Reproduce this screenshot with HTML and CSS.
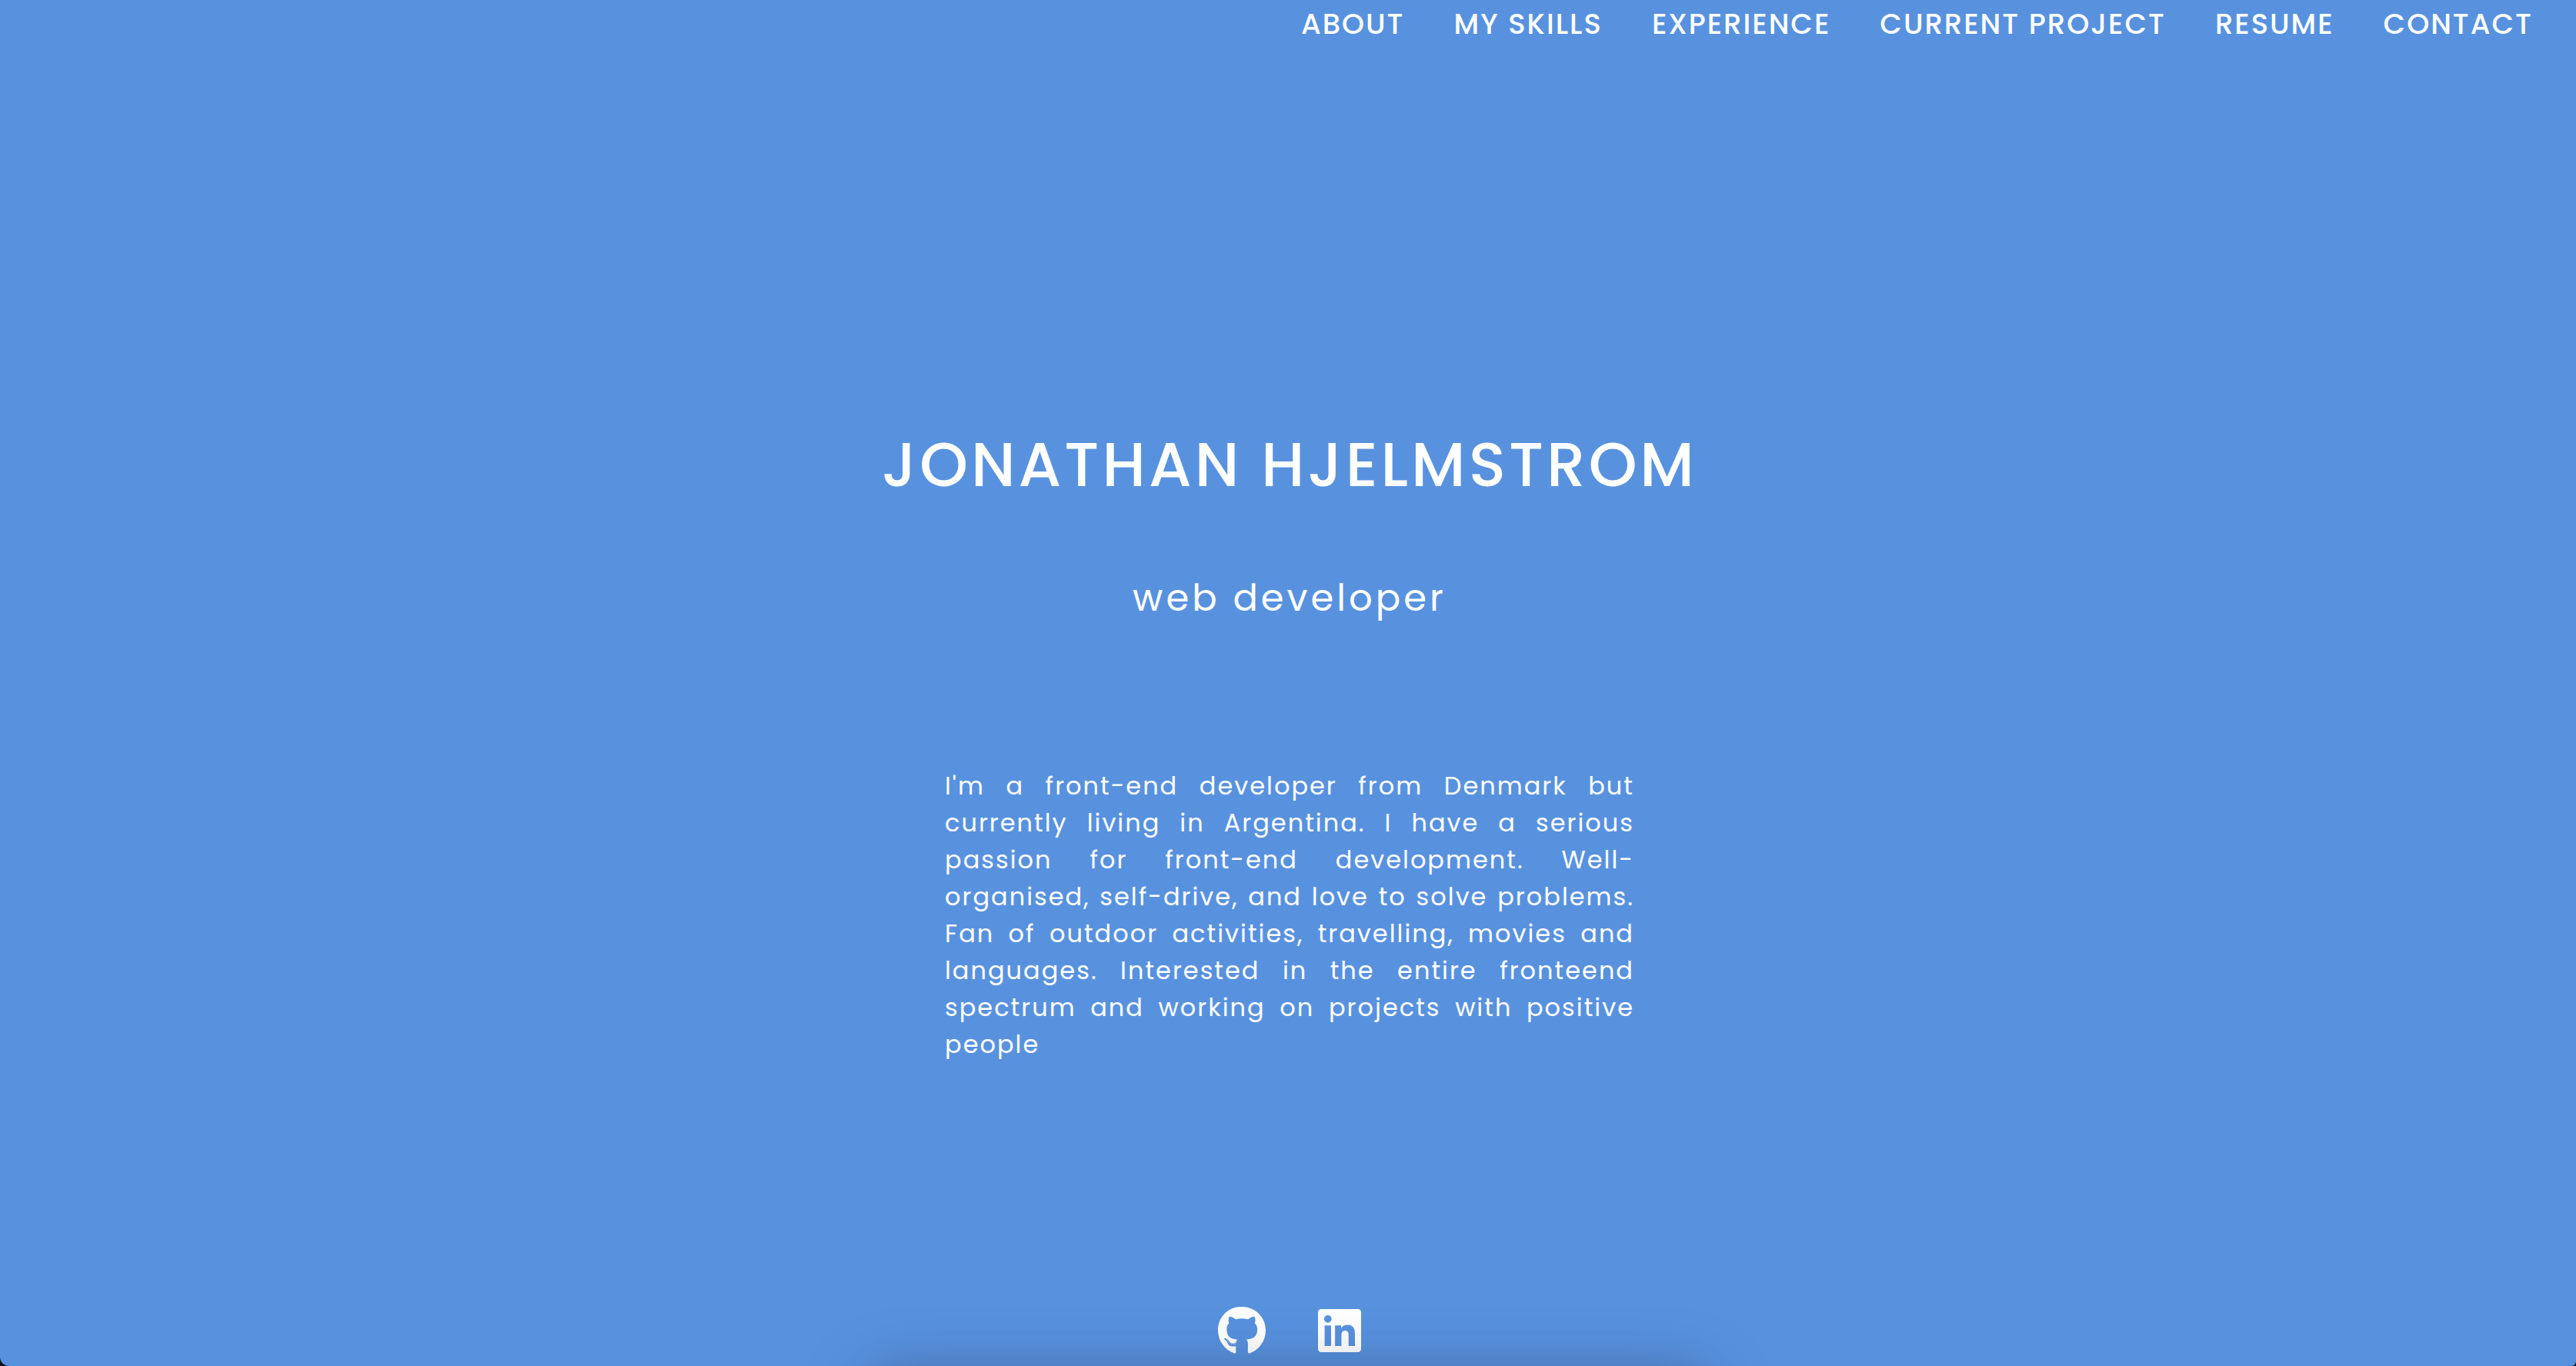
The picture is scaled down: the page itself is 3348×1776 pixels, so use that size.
FILE: index.html
```html
<!DOCTYPE html>
<html lang="en">
<head>
  <meta charset="utf-8">
  <meta name="viewport" content="width=device-width, initial-scale=1">
  <title>Jonathan Hjelmstrom</title>
  <link rel="stylesheet" href="styles.css">
</head>
<body>
  <div class="page">
    <header class="header">
      <nav class="nav" aria-label="Main">
        <a href="#about">ABOUT</a>
        <a href="#skills">MY SKILLS</a>
        <a href="#experience">EXPERIENCE</a>
        <a href="#project">CURRENT PROJECT</a>
        <a href="#resume">RESUME</a>
        <a href="#contact">CONTACT</a>
      </nav>
    </header>
    <main class="intro" id="about">
      <h1 class="name">JONATHAN HJELMSTROM</h1>
      <h2 class="role">web developer</h2>
      <p class="bio">I'm a front-end developer from Denmark but currently living in Argentina. I have a serious passion for front-end development. Well-organised, self-drive, and love to solve problems. Fan of outdoor activities, travelling, movies and languages. Interested in the entire fronteend spectrum and working on projects with positive people</p>
    </main>
    <footer class="social">
      <a href="#github" aria-label="GitHub">
        <svg class="icon icon-github" viewBox="0 0 496 512" aria-hidden="true"><path d="M165.9 397.4c0 2-2.3 3.6-5.2 3.6-3.3.3-5.6-1.3-5.6-3.6 0-2 2.3-3.6 5.2-3.6 3-.3 5.6 1.3 5.6 3.6zm-31.1-4.5c-.7 2 1.3 4.3 4.3 4.9 2.6 1 5.6 0 6.2-2s-1.3-4.3-4.3-5.2c-2.6-.7-5.5.3-6.2 2.3zm44.2-1.7c-2.9.7-4.9 2.6-4.6 4.9.3 2 2.9 3.3 5.9 2.6 2.9-.7 4.9-2.6 4.6-4.6-.3-1.9-3-3.2-5.9-2.9zM244.8 8C106.1 8 0 113.3 0 252c0 110.9 69.8 205.8 169.5 239.2 12.8 2.3 17.3-5.6 17.3-12.1 0-6.2-.3-40.4-.3-61.4 0 0-70 15-84.7-29.8 0 0-11.4-29.1-27.8-36.6 0 0-22.9-15.7 1.6-15.4 0 0 24.9 2 38.6 25.8 21.9 38.6 58.6 27.5 72.9 20.9 2.3-16 8.8-27.1 16-33.7-55.9-6.2-112.3-14.3-112.3-110.5 0-27.5 7.6-41.3 23.6-58.9-2.6-6.5-11.1-33.3 2.6-67.9 20.9-6.5 69 27 69 27 20-5.6 41.5-8.5 62.8-8.5s42.8 2.9 62.8 8.5c0 0 48.1-33.6 69-27 13.7 34.7 5.2 61.4 2.6 67.9 16 17.7 25.8 31.5 25.8 58.9 0 96.5-58.9 104.2-114.8 110.5 9.2 7.9 17 22.9 17 46.4 0 33.7-.3 75.4-.3 83.6 0 6.5 4.6 14.4 17.3 12.1C428.2 457.8 496 362.9 496 252 496 113.3 383.5 8 244.8 8zM97.2 352.9c-1.3 1-1 3.3.7 5.2 1.6 1.6 3.9 2.3 5.2 1 1.3-1 1-3.3-.7-5.2-1.6-1.6-3.9-2.3-5.2-1zm-10.8-8.1c-.7 1.3.3 2.9 2.3 3.9 1.6 1 3.6.7 4.3-.7.7-1.3-.3-2.9-2.3-3.9-2-.6-3.6-.3-4.3.7zm32.4 35.6c-1.6 1.3-1 4.3 1.3 6.2 2.3 2.3 5.2 2.6 6.5 1 1.3-1.3.7-4.3-1.3-6.2-2.2-2.3-5.2-2.6-6.5-1zm-11.4-14.7c-1.6 1-1.6 3.6 0 5.9 1.6 2.3 4.3 3.3 5.6 2.3 1.6-1.3 1.6-3.9 0-6.2-1.4-2.3-4-3.3-5.6-2z"/></svg>
      </a>
      <a href="#linkedin" aria-label="LinkedIn">
        <svg class="icon icon-linkedin" viewBox="0 0 448 512" aria-hidden="true"><path d="M416 32H31.9C14.3 32 0 46.5 0 64.3v383.4C0 465.5 14.3 480 31.9 480H416c17.6 0 32-14.5 32-32.3V64.3c0-17.8-14.4-32.3-32-32.3zM135.4 416H69V202.2h66.5V416zm-33.2-243c-21.3 0-38.5-17.3-38.5-38.5S80.9 96 102.2 96c21.2 0 38.5 17.3 38.5 38.5 0 21.3-17.2 38.5-38.5 38.5zm282.1 243h-66.4V312c0-24.8-.5-56.7-34.5-56.7-34.6 0-39.9 27-39.9 54.9V416h-66.4V202.2h63.7v29.2h.9c8.9-16.8 30.6-34.5 62.9-34.5 67.2 0 79.7 44.3 79.7 101.9V416z"/></svg>
      </a>
    </footer>
    <div class="shade"></div>
  </div>
</body>
</html>
```
FILE: styles.css
```css
* {
  box-sizing: border-box;
}

html {
  background: #101418;
}

body {
  margin: 0;
  color: #fff;
  font-family: Poppins, Inter, sans-serif;
}

.page {
  position: relative;
  display: flex;
  flex-direction: column;
  min-height: 100vh;
  overflow: hidden;
  background: #5892df;
  border-radius: 0 0 6px 12px;
}

a {
  color: inherit;
  text-decoration: none;
}

.header {
  padding: 4px 56px 0;
}

.nav {
  display: flex;
  flex-wrap: wrap;
  justify-content: flex-end;
  gap: 0 64px;
  font-size: 37px;
  line-height: 54px;
  font-weight: 500;
  letter-spacing: 2px;
}

.intro {
  flex: 1;
  display: flex;
  flex-direction: column;
  align-items: center;
  padding: 486px 32px 0 36px;
}

.name {
  margin: 0;
  font-size: 80px;
  line-height: 120px;
  font-weight: 500;
  letter-spacing: 4px;
}

.role {
  margin: 78px 0 0;
  font-size: 48px;
  line-height: 72px;
  font-weight: 400;
  letter-spacing: 4px;
}

.bio {
  width: 100%;
  max-width: 896px;
  margin: 184px 0 0;
  font-size: 32px;
  line-height: 48px;
  letter-spacing: 2px;
  text-align: justify;
}

.social {
  display: flex;
  justify-content: center;
  gap: 68px;
  padding: 0 0 14px 4px;
}

.icon {
  display: block;
  height: 64px;
  fill: #fff;
}

.icon-github {
  width: 62px;
}

.icon-linkedin {
  width: 56px;
}

/* soft shadow rising from the bottom edge, over the icons */
.shade {
  position: absolute;
  top: 100%;
  left: 50%;
  width: 1088px;
  height: 200px;
  transform: translateX(-50%);
  box-shadow: 0 16px 90px rgba(0, 0, 0, 0.32);
  pointer-events: none;
}
```
